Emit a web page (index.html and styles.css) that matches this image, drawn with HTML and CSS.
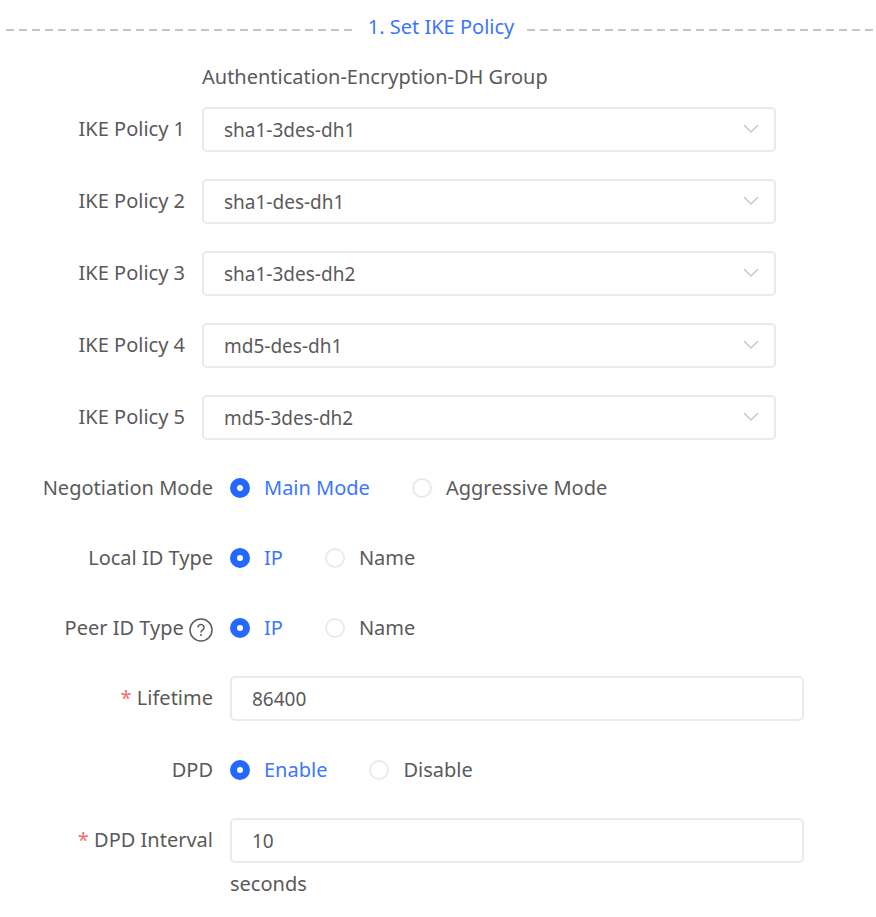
FILE: index.html
```
<!DOCTYPE html>
<html lang="en">
<head>
    <meta charset="UTF-8">
    <meta name="viewport" content="width=device-width, initial-scale=1.0">
    <title>IKE Policy</title>
    <link rel="stylesheet" href="styles.css">
</head>
<body>
    <form class="ike-form">
        <h1 class="divider">1. Set IKE Policy</h1>

        <div class="policies">
            <p class="hint">Authentication-Encryption-DH Group</p>
            <div class="row">
                <label class="label" for="policy1">IKE Policy 1</label>
                <div class="select">
                    <select class="field" id="policy1"><option>sha1-3des-dh1</option></select>
                    <svg class="arrow" viewBox="0 0 16 10"><path d="M1 1l7 7 7-7"/></svg>
                </div>
            </div>
            <div class="row">
                <label class="label" for="policy2">IKE Policy 2</label>
                <div class="select">
                    <select class="field" id="policy2"><option>sha1-des-dh1</option></select>
                    <svg class="arrow" viewBox="0 0 16 10"><path d="M1 1l7 7 7-7"/></svg>
                </div>
            </div>
            <div class="row">
                <label class="label" for="policy3">IKE Policy 3</label>
                <div class="select">
                    <select class="field" id="policy3"><option>sha1-3des-dh2</option></select>
                    <svg class="arrow" viewBox="0 0 16 10"><path d="M1 1l7 7 7-7"/></svg>
                </div>
            </div>
            <div class="row">
                <label class="label" for="policy4">IKE Policy 4</label>
                <div class="select">
                    <select class="field" id="policy4"><option>md5-des-dh1</option></select>
                    <svg class="arrow" viewBox="0 0 16 10"><path d="M1 1l7 7 7-7"/></svg>
                </div>
            </div>
            <div class="row">
                <label class="label" for="policy5">IKE Policy 5</label>
                <div class="select">
                    <select class="field" id="policy5"><option>md5-3des-dh2</option></select>
                    <svg class="arrow" viewBox="0 0 16 10"><path d="M1 1l7 7 7-7"/></svg>
                </div>
            </div>
        </div>

        <div class="settings">
            <div class="row">
                <span class="label" id="modeLabel">Negotiation Mode</span>
                <div class="radios" role="radiogroup" aria-labelledby="modeLabel">
                    <label class="radio"><input type="radio" name="mode" checked><span>Main Mode</span></label>
                    <label class="radio"><input type="radio" name="mode"><span>Aggressive Mode</span></label>
                </div>
            </div>
            <div class="row">
                <span class="label" id="localLabel">Local ID Type</span>
                <div class="radios" role="radiogroup" aria-labelledby="localLabel">
                    <label class="radio"><input type="radio" name="local" checked><span>IP</span></label>
                    <label class="radio"><input type="radio" name="local"><span>Name</span></label>
                </div>
            </div>
            <div class="row">
                <span class="label" id="peerLabel">Peer ID Type
                    <svg class="help" viewBox="0 0 24 24"><circle cx="12" cy="12" r="11"/><path d="M9 9.500a3 3 0 1 1 4.600 2.500c-1.100.7-1.600 1.300-1.600 2.500"/><path d="M12 16v2"/></svg>
                </span>
                <div class="radios" role="radiogroup" aria-labelledby="peerLabel">
                    <label class="radio"><input type="radio" name="peer" checked><span>IP</span></label>
                    <label class="radio"><input type="radio" name="peer"><span>Name</span></label>
                </div>
            </div>
            <div class="row">
                <label class="label required" for="lifetime">Lifetime</label>
                <input class="field" type="text" id="lifetime" value="86400">
            </div>
            <div class="row">
                <span class="label" id="dpdLabel">DPD</span>
                <div class="radios" role="radiogroup" aria-labelledby="dpdLabel">
                    <label class="radio"><input type="radio" name="dpd" checked><span>Enable</span></label>
                    <label class="radio"><input type="radio" name="dpd"><span>Disable</span></label>
                </div>
            </div>
            <div class="row">
                <label class="label required" for="interval">DPD Interval</label>
                <div>
                    <input class="field" type="text" id="interval" value="10">
                    <p class="unit">seconds</p>
                </div>
            </div>
        </div>
    </form>
</body>
</html>
```
FILE: styles.css
```
* {
    box-sizing: border-box;
}
body {
    margin: 0;
    background-color: white;
    color: #5a5a5a;
    font-family: "Noto Sans", sans-serif;
    font-size: 20px;
}
.ike-form {
    padding-top: 13px;
}
.divider {
    display: flex;
    align-items: center;
    gap: 13px;
    margin: 0;
    padding-left: 6px;
    color: #3b76ff;
    font-size: 20px;
    font-weight: normal;
    line-height: 28px;
}
.divider::before,
.divider::after {
    content: "";
    flex: 1;
    height: 2px;
    margin-top: 5px;
    background: repeating-linear-gradient(to right, #c4c4c4 0 8px, transparent 8px 13px);
}
.hint {
    margin: 0 0 0 202px;
    padding: 22px 0 16px;
    line-height: 28px;
}
.row {
    display: grid;
    grid-template-columns: 213px minmax(0, 574px);
    column-gap: 17px;
    margin-bottom: 27px;
}
.policies .row {
    grid-template-columns: 185px minmax(0, 574px);
}
.policies .row:last-child {
    margin-bottom: 26px;
}
.label {
    line-height: 43px;
    text-align: right;
    white-space: nowrap;
}
.required::before {
    content: "* ";
    color: #f56c6c;
}
.field {
    display: block;
    width: 100%;
    height: 45px;
    padding: 0 20px;
    border: 2px solid #e8eaf0;
    border-radius: 5px;
    background-color: white;
    color: #5a5a5a;
    font-family: inherit;
    font-size: 19px;
    appearance: none;
}
.select {
    position: relative;
}
.arrow {
    position: absolute;
    top: 17px;
    right: 17px;
    width: 16px;
    height: 10px;
    fill: none;
    stroke: #c8c8c8;
    stroke-width: 1.5;
    pointer-events: none;
}
.help {
    width: 24px;
    height: 24px;
    vertical-align: middle;
    fill: none;
    stroke: #5a5a5a;
    stroke-width: 1.5;
}
.radios {
    display: flex;
    gap: 42px;
    height: 43px;
}
.radio {
    display: flex;
    align-items: center;
    gap: 14px;
}
.radio input {
    width: 20px;
    height: 20px;
    margin: 0;
    border: 2px solid #e8eaf0;
    border-radius: 50%;
    background-color: white;
    appearance: none;
}
.radio input:checked {
    border: 7px solid #2468ff;
}
.radio input:checked + span {
    color: #3b76ff;
}
.unit {
    margin: 0;
    padding-top: 7px;
    line-height: 28px;
}
```
